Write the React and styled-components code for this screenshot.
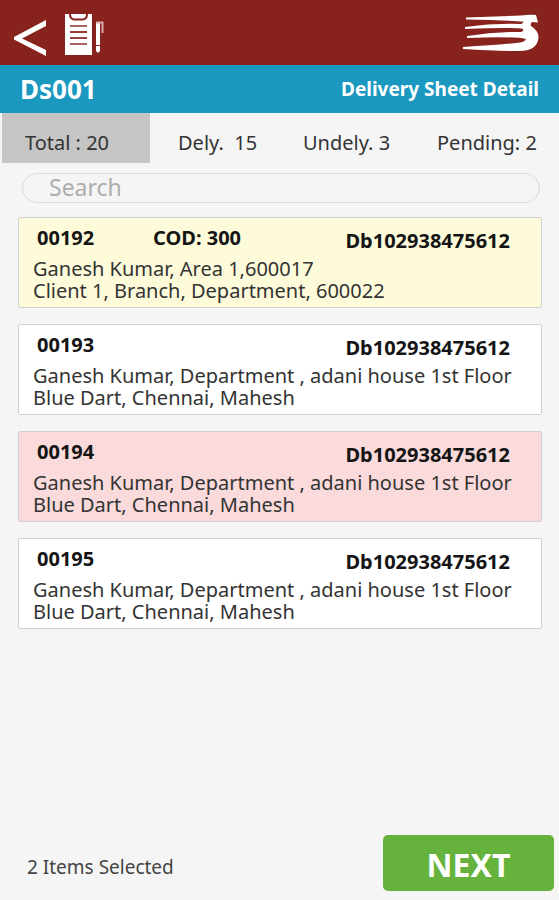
import React, { useState } from "react";
import styled, { createGlobalStyle } from "styled-components";

const GlobalStyle = createGlobalStyle`
  *, *::before, *::after { box-sizing: border-box; }
  body {
    margin: 0;
    background: #f5f5f5;
    color: #222;
    font-family: "Noto Sans", "Open Sans", sans-serif;
  }
  button, input { font-family: inherit; }
`;

const Page = styled.div`
  display: flex;
  flex-direction: column;
  min-height: 100vh;
`;

const AppBar = styled.header`
  display: flex;
  align-items: center;
  height: 65px;
  padding: 4px 20px 0 14px;
  background: #88221d;
`;

const IconButton = styled.button`
  display: flex;
  padding: 6px 0 0;
  border: 0;
  background: none;
  color: #fff;
  cursor: pointer;
`;

const ClipboardIcon = styled.svg`
  margin-left: 17px;
`;

const Logo = styled.svg`
  margin: 0 0 4px auto;
`;

const TitleBar = styled.div`
  display: flex;
  align-items: center;
  justify-content: space-between;
  height: 48px;
  padding: 0 20px;
  background: #1b98c0;
  color: #fff;
`;

const SheetId = styled.h1`
  margin: 0;
  font-size: 26px;
  line-height: 32px;
`;

const SheetTitle = styled.h2`
  margin: 0;
  font-size: 19px;
  line-height: 32px;
`;

const Tabs = styled.nav`
  display: grid;
  grid-template-columns: 148fr 120fr 129fr 139fr;
  column-gap: 5px;
  height: 50px;
  padding: 0 6px 0 2px;
`;

const Tab = styled.button`
  padding: 10px 0 0 23px;
  border: 0;
  background: ${(p) => (p.$active ? "#c5c5c5" : "transparent")};
  color: #333;
  font-size: 20px;
  line-height: 28px;
  text-align: left;
  white-space: pre;
  cursor: pointer;
`;

const SearchInput = styled.input`
  height: 30px;
  margin: 10px 19px 14px 22px;
  padding: 0 26px 2px;
  border: 1px solid #d9d9d9;
  border-radius: 15px;
  background: transparent;
  color: #333;
  font-size: 23px;
  line-height: 26px;
  outline: none;
  &::placeholder { color: #adadad; opacity: 1; }
`;

const List = styled.ul`
  display: flex;
  flex-direction: column;
  gap: 16px;
  margin: 0 17px 0 18px;
  padding: 0;
  list-style: none;
`;

const tones = { plain: "#ffffff", cod: "#fefbdb", failed: "#fadada" };

const Card = styled.li`
  padding: 0 14px 5px;
  border: 1px solid #d0d0d0;
  border-radius: 2px;
  background: ${(p) => tones[p.$tone]};
`;

const CardHead = styled.div`
  display: grid;
  grid-template-columns: 116px 1fr auto;
  align-items: center;
  height: 40px;
  padding: 0 17px 0 4px;
  color: #151515;
  font-size: 20px;
  font-weight: 700;
  line-height: 28px;
`;

const Waybill = styled.span`
  padding-top: 6px;
`;

const Details = styled.p`
  margin: 0;
  color: #333;
  font-size: 20px;
  line-height: 22px;
`;

const Footer = styled.footer`
  display: flex;
  align-items: center;
  justify-content: space-between;
  margin-top: auto;
  padding: 16px 5px 9px 27px;
`;

const Selected = styled.span`
  padding-top: 8px;
  color: #444;
  font-size: 19px;
  line-height: 28px;
`;

const NextButton = styled.button`
  width: 171px;
  height: 56px;
  padding: 4px 0 0;
  border: 0;
  border-radius: 5px;
  background: #65b33c;
  color: #fff;
  font-size: 32px;
  font-weight: 700;
  line-height: 40px;
  cursor: pointer;
`;

const tabs = ["Total : 20", "Dely.  15", "Undely. 3", "Pending: 2"];

const house = "Ganesh Kumar, Department , adani house 1st Floor";
const office = "Blue Dart, Chennai, Mahesh";
const items = [
  {
    id: "00192",
    cod: "COD: 300",
    tone: "cod",
    lines: ["Ganesh Kumar, Area 1,600017", "Client 1, Branch, Department, 600022"],
  },
  { id: "00193", tone: "plain", lines: [house, office] },
  { id: "00194", tone: "failed", lines: [house, office] },
  { id: "00195", tone: "plain", lines: [house, office] },
];

export default function App() {
  const [active, setActive] = useState(0);
  return (
    <Page>
      <GlobalStyle />
      <AppBar>
        <IconButton aria-label="Back">
          <svg width="34" height="38" viewBox="0 0 34 38" aria-hidden="true">
            <path d="M32 1v6L8 19.500 32 31v6L0 20.500v-2.500z" fill="currentColor" />
          </svg>
        </IconButton>
        <ClipboardIcon width="40" height="42" viewBox="0 0 40 42" aria-hidden="true">
          <path d="M0 0h27v41H0z" fill="#fff" />
          <path d="M5 0q0 5 4 5.500h9Q22 5 22 0" fill="none" stroke="#88221d" strokeWidth="2" />
          <path d="M5 12h17M5 30h17" stroke="#a8625f" strokeWidth="2" />
          <path d="M5 18h17M5 24h17" stroke="#96403c" strokeWidth="2" />
          <path d="M31 8h4v23h-4zM31 32h4v5l-2 2-2-2z" fill="#fff" />
          <path d="M31 8.500h6.500V19" fill="none" stroke="#dcaaa8" strokeWidth="2" />
        </ClipboardIcon>
        <Logo width="76" height="38" viewBox="0 0 76 38" role="img" aria-label="Courier logo">
          <path
            fill="#fff"
            d="M3 3.500 58 1.500Q66 .5 73 1L75 8.500 69 8Q67 10 68 12Q76 17 75.500 24Q74 37 56 37Q32 37 0 35V33Q36 31 57 28.500Q62 27.500 63 25Q50 22 4 24V22Q32 17.500 58 18Q61 17 60 15Q54 13 2 15V13Q30 9 58 10Q61 9 60 7.500Q50 6.500 3 5.500z"
          />
        </Logo>
      </AppBar>
      <TitleBar>
        <SheetId>Ds001</SheetId>
        <SheetTitle>Delivery Sheet Detail</SheetTitle>
      </TitleBar>
      <Tabs>
        {tabs.map((label, i) => (
          <Tab key={label} $active={i === active} onClick={() => setActive(i)}>
            {label}
          </Tab>
        ))}
      </Tabs>
      <SearchInput type="search" aria-label="Search" placeholder="Search" />
      <List>
        {items.map((item) => (
          <Card key={item.id} $tone={item.tone}>
            <CardHead>
              <span>{item.id}</span>
              <span>{item.cod}</span>
              <Waybill>Db102938475612</Waybill>
            </CardHead>
            {item.lines.map((line) => (
              <Details key={line}>{line}</Details>
            ))}
          </Card>
        ))}
      </List>
      <Footer>
        <Selected>2 Items Selected</Selected>
        <NextButton>NEXT</NextButton>
      </Footer>
    </Page>
  );
}
